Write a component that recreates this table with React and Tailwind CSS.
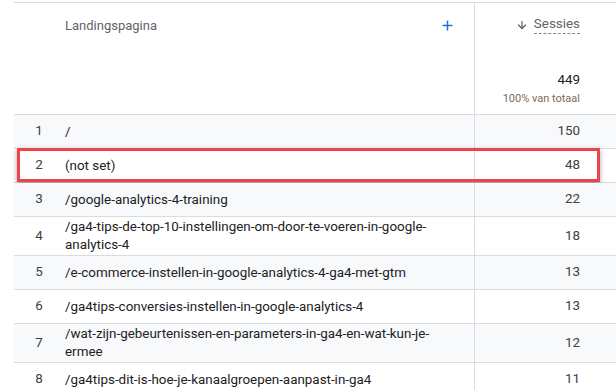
import { Plus, ArrowDown } from 'lucide-react';

const rows = [
  { n: 1, page: '/', value: 150 },
  { n: 2, page: '(not set)', value: 48, marked: true },
  { n: 3, page: '/google-analytics-4-training', value: 22 },
  { n: 4, page: '/ga4-tips-de-top-10-instellingen-om-door-te-voeren-in-google-analytics-4', value: 18 },
  { n: 5, page: '/e-commerce-instellen-in-google-analytics-4-ga4-met-gtm', value: 13 },
  { n: 6, page: '/ga4tips-conversies-instellen-in-google-analytics-4', value: 13 },
  { n: 7, page: '/wat-zijn-gebeurtenissen-en-parameters-in-ga4-en-wat-kun-je-ermee', value: 12 },
  { n: 8, page: '/ga4tips-dit-is-hoe-je-kanaalgroepen-aanpast-in-ga4', value: 11 },
];

function Row({ row }) {
  const shade = row.n % 2 === 1 ? 'bg-[#f8f9fa]' : 'bg-white';
  return (
    <div className={`relative grid grid-cols-[50px_410px_142px] border-b border-[#dadce0] ${shade}`}>
      <div className="flex items-center justify-center text-[13.4px] text-[#3c4043]">{row.n}</div>
      <div className="flex min-h-[33px] items-center py-px pl-px pr-[30px] text-[13.4px] leading-[18px] text-[#202124] [overflow-wrap:anywhere]">
        {row.page}
      </div>
      <div className="flex items-center justify-end border-l border-[#dadce0] pr-[36px] text-[13.4px] text-[#3c4043]">
        {row.value}
      </div>
      {row.marked && (
        <div className="pointer-events-none absolute left-[3px] top-[-1px] h-[34px] w-[583px] border-[3px] border-[#ec4449] shadow-[0_2px_5px_rgba(0,0,0,0.35)]" />
      )}
    </div>
  );
}

export default function App() {
  return (
    <div className="h-[390px] w-[616px] overflow-hidden bg-white pl-[14px] pt-[2px] font-['Roboto',sans-serif]">
      <div className="w-[602px] border-t border-[#dadce0]">
        {/* kop */}
        <div className="grid h-[112px] grid-cols-[50px_410px_142px] border-b border-[#dadce0]">
          <div />
          <div className="flex items-start justify-between pr-[19px] pt-[13px] pl-px">
            <span className="text-[13px] text-[#5f6368]">Landingspagina</span>
            <Plus className="mt-[2px] h-[15px] w-[15px] text-[#1a73e8]" strokeWidth={2.4} />
          </div>
          <div className="flex flex-col items-end border-l border-[#dadce0] pr-[36px] pt-[12px]">
            <div className="flex items-center gap-[6px]">
              <ArrowDown className="h-[12px] w-[12px] text-[#5f6368]" strokeWidth={2.5} />
              <span className="border-b border-dashed border-[#80868b] text-[13.4px] leading-[18px] text-[#5f6368]">Sessies</span>
            </div>
            <div className="mt-[37px] text-[13.4px] leading-[18px] text-[#202124]">449</div>
            <div className="mt-[2px] text-[11px] leading-[16px] text-[#7d6b5d]">100% van totaal</div>
          </div>
        </div>
        {rows.map((r) => (
          <Row key={r.n} row={r} />
        ))}
      </div>
    </div>
  );
}
